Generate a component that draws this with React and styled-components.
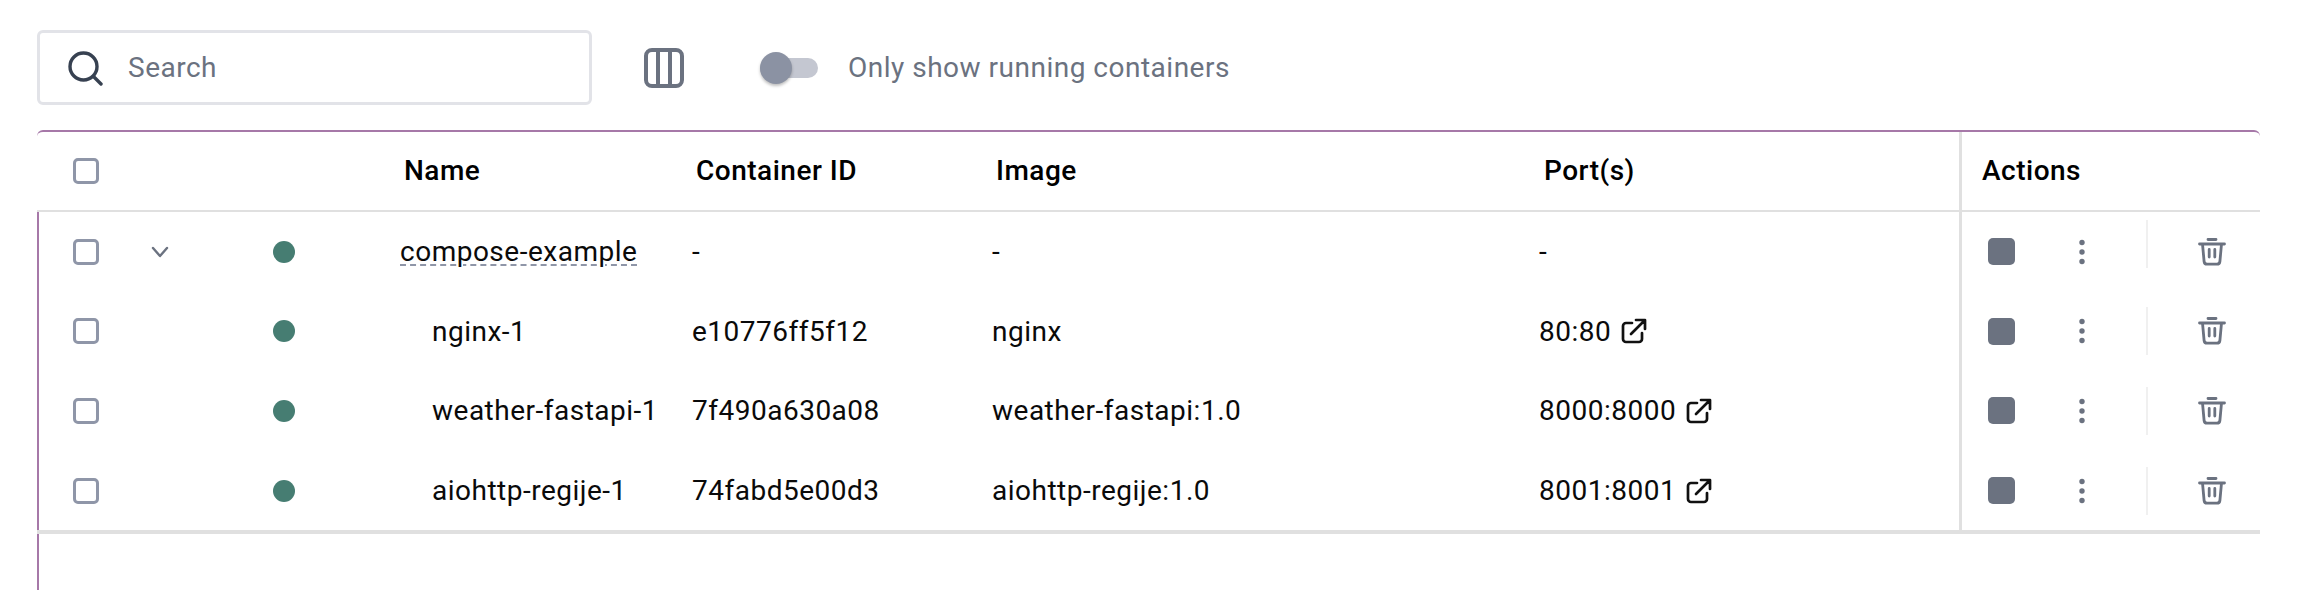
import React from "react";
import styled, { createGlobalStyle } from "styled-components";

const Global = createGlobalStyle`
  html, body { margin: 0; padding: 0; background: #fff; height: 590px; overflow: hidden; }
  body { font-family: Roboto, "Liberation Sans", sans-serif; }
  #root { height: 590px; }
`;
const Page = styled.div`
  height: 590px; box-sizing: border-box; padding: 30px 42px 0 37px;
  display: flex; flex-direction: column; background: #fff;
`;
const Toolbar = styled.div`
  display: flex; align-items: center; height: 75px; margin-bottom: 25px; flex: none;
`;
const SearchBox = styled.div`
  box-sizing: border-box; width: 555px; height: 75px; border: 3px solid #e2e3e8; border-radius: 6px;
  display: flex; align-items: center; padding-left: 27px; gap: 25px;
  color: #6b7280; font-size: 28px; letter-spacing: 0.5px;
`;
const SearchIcon = styled.svg`width: 36px; height: 36px; flex: none;`;
const ColumnsIcon = styled.svg`width: 42px; height: 42px; margin-left: 51px; flex: none;`;
const Toggle = styled.div`
  position: relative; width: 58px; height: 20px; margin-left: 75px; border-radius: 10px; background: #c4c7d1;
`;
const Knob = styled.div`
  position: absolute; left: 0; top: -6px; width: 32px; height: 32px; border-radius: 50%;
  background: #8b92a3; box-shadow: 0 2px 3px rgba(0,0,0,.25);
`;
const ToggleLabel = styled.span`
  margin-left: 30px; color: #6b7280; font-size: 28px; letter-spacing: 0.5px;
`;
const Panel = styled.div`
  flex: 1; display: flex; flex-direction: column; border-top: 2px solid #a678a8; border-radius: 6px 6px 0 0;
`;
const columns = "100px 100px 163px 292px 300px 547px 421px 300px";
const HeaderRow = styled.div`
  display: grid; grid-template-columns: ${columns}; height: 78px; border-bottom: 2px solid #e0e0e0; flex: none;
`;
const Body = styled.div`
  flex: 1; box-shadow: inset 2px 0 0 #a678a8;
`;
const Rows = styled.div`
  border-bottom: 4px solid #e0e0e0; border-image: linear-gradient(#c7c9d4 50%, #e0e0e0 50%) 1;
`;
const Row = styled.div`
  display: grid; grid-template-columns: ${columns}; height: 79.6px;
`;
const Cell = styled.div`
  display: flex; align-items: center; min-width: 0; white-space: nowrap;
  font-size: 28px; letter-spacing: 0.5px; color: #0a0a0a;
  padding-left: ${p => p.$indent || 0}px;
`;
const HeadCell = styled(Cell)`
  font-weight: 500; color: #000; padding-bottom: 1px; padding-left: ${p => p.$indent ?? 4}px;
`;
const ActionsHead = styled(HeadCell)`
  border-left: 3px solid #e0e0e0; padding-left: 20px; margin-left: -1px;
`;
const ActionsCell = styled(Cell)`
  border-left: 3px solid #e0e0e0; margin-left: -1px; padding-left: 26px;
`;
const Check = styled.div`
  box-sizing: border-box; width: 26px; height: 26px; margin-left: 36px; border: 3px solid #8f96a8; border-radius: 5px;
`;
const Chevron = styled.svg`width: 20px; height: 12px; margin-left: 13px;`;
const Dot = styled.div`
  width: 22px; height: 22px; border-radius: 50%; background: #467d72; margin-left: 36px;
`;
const Underlined = styled.span`
  text-decoration: underline dashed #8f96a8 2px; text-underline-offset: 3px;
`;
const LinkIcon = styled.svg`width: 26px; height: 26px; margin-left: 10px; flex: none;`;
const Stop = styled.div`
  width: 27px; height: 27px; border-radius: 5px; background: #6b7280; flex: none;
`;
const Kebab = styled.svg`width: 10px; height: 28px; margin-left: 62px; flex: none;`;
const Divider = styled.div`
  width: 2px; height: 48px; background: #f0f0f0; margin-left: 59px; flex: none;
  margin-bottom: ${p => (p.$lifted ? 16 : 0)}px;
`;
const Trash = styled.svg`width: 28px; height: 28px; margin-left: 50px; flex: none;`;

const data = [
  { name: "compose-example", id: "-", image: "-", port: "-", group: true },
  { name: "nginx-1", id: "e10776ff5f12", image: "nginx", port: "80:80" },
  { name: "weather-fastapi-1", id: "7f490a630a08", image: "weather-fastapi:1.0", port: "8000:8000" },
  { name: "aiohttp-regije-1", id: "74fabd5e00d3", image: "aiohttp-regije:1.0", port: "8001:8001" },
];

const KebabIcon = () => (
  <Kebab viewBox="0 0 10 28"><circle cx="5" cy="4.5" r="2.7" fill="#6b7280"/><circle cx="5" cy="14" r="2.7" fill="#6b7280"/><circle cx="5" cy="23.5" r="2.7" fill="#6b7280"/></Kebab>
);
const TrashIcon = () => (
  <Trash viewBox="0 0 28 28" fill="none" stroke="#6b7280" strokeWidth="2.8" strokeLinecap="round" strokeLinejoin="round">
    <path d="M1.5 6h25M10 1.5h8M4.5 6l1.6 17.5a3 3 0 0 0 3 2.7h9.8a3 3 0 0 0 3-2.7L23.5 6M11.2 11.5v7.5M16.8 11.5v7.5"/>
  </Trash>
);
const ExternalIcon = () => (
  <LinkIcon viewBox="0 0 26 26" fill="none" stroke="#111" strokeWidth="2.7" strokeLinecap="round" strokeLinejoin="round">
    <path d="M11 5H5a3 3 0 0 0-3 3v13a3 3 0 0 0 3 3h13a3 3 0 0 0 3-3v-6M10 16 23.5 2.5M15 2h9v9"/>
  </LinkIcon>
);

export default function App() {
  return (
    <Page>
      <Global />
      <Toolbar>
        <SearchBox>
          <SearchIcon viewBox="0 0 36 36" fill="none" stroke="#374151" strokeWidth="3.4" strokeLinecap="round">
            <circle cx="16.5" cy="16.5" r="13.5"/><path d="M26.5 26.5 34 34"/>
          </SearchIcon>
          Search
        </SearchBox>
        <ColumnsIcon viewBox="0 0 42 42" fill="none" stroke="#6b7280" strokeWidth="4" strokeLinejoin="round">
          <rect x="3" y="3" width="36" height="36" rx="6"/><path d="M15 3v36M27 3v36"/>
        </ColumnsIcon>
        <Toggle><Knob /></Toggle>
        <ToggleLabel>Only show running containers</ToggleLabel>
      </Toolbar>
      <Panel>
        <HeaderRow>
          <HeadCell $indent={0}><Check /></HeadCell>
          <HeadCell /><HeadCell />
          <HeadCell>Name</HeadCell>
          <HeadCell>Container ID</HeadCell>
          <HeadCell>Image</HeadCell>
          <HeadCell $indent={5}>Port(s)</HeadCell>
          <ActionsHead>Actions</ActionsHead>
        </HeaderRow>
        <Body>
          <Rows>
            {data.map(r => (
              <Row key={r.name}>
                <Cell><Check /></Cell>
                <Cell>{r.group && (
                  <Chevron viewBox="0 0 20 12" fill="none" stroke="#6b7280" strokeWidth="2.4" strokeLinecap="round" strokeLinejoin="round"><path d="M3 2l7 8 7-8"/></Chevron>
                )}</Cell>
                <Cell><Dot /></Cell>
                <Cell $indent={r.group ? 0 : 32}>{r.group ? <Underlined>{r.name}</Underlined> : r.name}</Cell>
                <Cell>{r.id}</Cell>
                <Cell>{r.image}</Cell>
                <Cell>{r.port}{!r.group && <ExternalIcon />}</Cell>
                <ActionsCell><Stop /><KebabIcon /><Divider $lifted={r.group} /><TrashIcon /></ActionsCell>
              </Row>
            ))}
          </Rows>
        </Body>
      </Panel>
    </Page>
  );
}
